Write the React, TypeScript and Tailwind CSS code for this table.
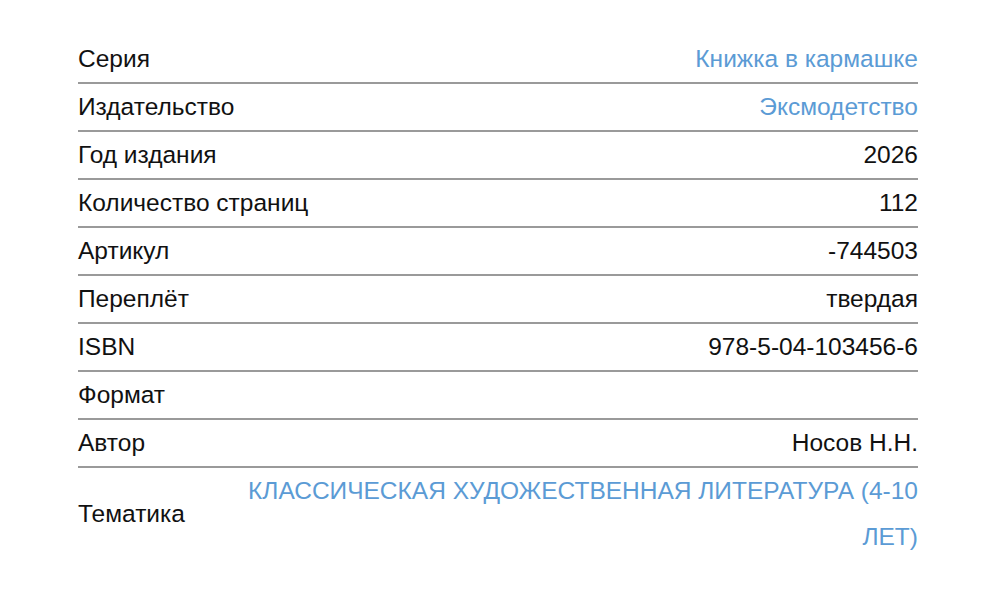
const rows: { label: string; value: string; link?: boolean }[] = [
  { label: "Серия", value: "Книжка в кармашке", link: true },
  { label: "Издательство", value: "Эксмодетство", link: true },
  { label: "Год издания", value: "2026" },
  { label: "Количество страниц", value: "112" },
  { label: "Артикул", value: "-744503" },
  { label: "Переплёт", value: "твердая" },
  { label: "ISBN", value: "978-5-04-103456-6" },
  { label: "Формат", value: "" },
  { label: "Автор", value: "Носов Н.Н." },
  { label: "Тематика", value: "КЛАССИЧЕСКАЯ ХУДОЖЕСТВЕННАЯ ЛИТЕРАТУРА (4-10 ЛЕТ)", link: true },
];

export default function App() {
  return (
    <div className="min-h-[594px] w-[1000px] bg-white pt-[36px] font-['Liberation_Sans',Arial,sans-serif] text-[24.5px] leading-[46px] text-[#111]">
      <div className="ml-[78px] w-[840px]">
        {rows.map((row, i) => (
          <div
            key={row.label}
            className={`flex items-center justify-between gap-8 ${
              i < rows.length - 1 ? "border-b-2 border-[#9a9a9a]" : ""
            }`}
          >
            <span className="shrink-0">{row.label}</span>
            <span className={`max-w-[680px] text-right ${row.link ? "text-[#5b9bd5]" : ""}`}>{row.value}</span>
          </div>
        ))}
      </div>
    </div>
  );
}
